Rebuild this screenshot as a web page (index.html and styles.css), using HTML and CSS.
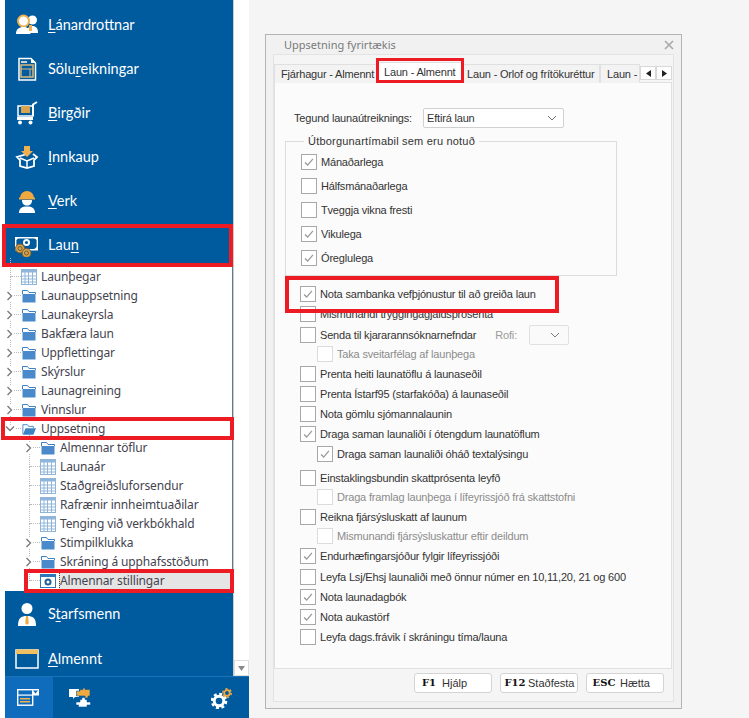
FILE: index.html
```html
<!DOCTYPE html>
<html lang="is">
<head>
<meta charset="utf-8">
<title>Uppsetning fyrirtækis</title>
<link rel="stylesheet" href="styles.css">
</head>
<body>
<svg class="defs" width="0" height="0" aria-hidden="true">
  <symbol id="folder" viewBox="0 0 14 14"><path d="M.5 5h13v8.500H.5z" fill="#4a8acb"/><path d="M.5 5V1.500h5L7 3.500h6.500V5" fill="none" stroke="#3f82c4"/></symbol>
  <symbol id="grid" viewBox="0 0 16 16"><rect x=".5" y=".5" width="15" height="15" fill="#fff" stroke="#8fb6da"/><rect x=".5" y=".5" width="15" height="3" fill="#8fb6da"/><path d="M4 3v13M7.500 3v13M11.500 3v13M1 7h15M1 10h15M1 13h15" stroke="#8fb6da"/></symbol>
  <symbol id="check" viewBox="0 0 16 16"><path d="M3.500 8.500l3 3 6-7" fill="none" stroke="#9a9a9a" stroke-width="1.500"/></symbol>
  <symbol id="chev" viewBox="0 0 8 10"><path d="M1.500 1l4 4-4 4" fill="none" stroke="#777" stroke-width="1.300"/></symbol>
  <symbol id="down" viewBox="0 0 10 6"><path d="M1 1l4 4 4-4" fill="none" stroke="#7a7a7a"/></symbol>
</svg>

<div class="page">
  <aside class="side">
    <div class="side-top">
      <div class="blue">
        <div class="nav"><svg class="nav-ico" viewBox="0 0 24 24"><circle cx="17.500" cy="7" r="4.500" fill="#fff"/><path d="M12 20c0-5 2-7 5.500-7s5.500 2 5.500 7z" fill="#fff"/><circle cx="8.500" cy="8" r="5.500" fill="#fff" stroke="#f0b050" stroke-width="2"/><path d="M1 21c0-5 3-7 7.500-7s7 2 7 7z" fill="#fff"/><rect x="14" y="12" width="3" height="6" fill="#f0b050"/></svg><span><u>L</u>ánardrottnar</span></div>
        <div class="nav"><svg class="nav-ico" viewBox="0 0 24 24"><path d="M4 1.500h12l4.500 4.500v17H4z" fill="#005a9e" stroke="#fff" stroke-width="1.500"/><path d="M16 1.500V6h4.500" fill="#fff"/><rect x="6" y="8" width="12" height="12" fill="none" stroke="#d9b77a" stroke-width="1.500"/><path d="M6 12h12M15 12v8" stroke="#d9b77a"/><rect x="6" y="4" width="6" height="2" fill="#cfcfcf"/></svg><span>Sölu<u>r</u>eikningar</span></div>
        <div class="nav"><svg class="nav-ico" viewBox="0 0 24 24"><path d="M3 5h15v10H3z" fill="none" stroke="#fff" stroke-width="1.500"/><rect x="6" y="5" width="9" height="7" fill="#d9a44e"/><path d="M18 15V3.500L22 1" fill="none" stroke="#fff" stroke-width="2"/><path d="M2 16h16v3H2z" fill="#fff"/><circle cx="5" cy="21.500" r="2" fill="#fff"/><circle cx="15.500" cy="21.500" r="2" fill="#fff"/></svg><span><u>B</u>irgðir</span></div>
        <div class="nav"><svg class="nav-ico" viewBox="0 0 24 24"><path d="M12 9L2 12l3 3v6l7 2 7-2v-6l3-3-4-3" fill="none" stroke="#fff" stroke-width="1.800"/><path d="M5 13l7 3 7-3M12 16v7" fill="none" stroke="#fff" stroke-width="1.500"/><path d="M9 1h6v5h3l-6 6-6-6h3z" fill="#f0b050"/></svg><span><u>I</u>nnkaup</span></div>
        <div class="nav"><svg class="nav-ico" viewBox="0 0 24 24"><path d="M5 9a7 7 0 0 1 14 0z" fill="#f0a93f"/><rect x="4" y="8.500" width="16" height="2" fill="#f0a93f"/><path d="M7 11h10c0 4-2 5.500-5 5.500S7 15 7 11z" fill="#fff"/><path d="M4 24c0-5 3-6.500 8-6.500s8 1.500 8 6.500z" fill="#fff"/></svg><span><u>V</u>erk</span></div>
        <div class="nav"><svg class="nav-ico" viewBox="0 0 24 24"><path d="M.7 4.700h21.600v12H.7z" fill="none" stroke="#fff" stroke-width="1.400"/><path d="M0 4h5l-5 4zM23 4h-5l5 4zM23 17h-5l5-4z" fill="#fff"/><circle cx="11.500" cy="9.500" r="3.500" fill="#fff"/><circle cx="11.500" cy="9.500" r="1.600" fill="#005a9e"/><circle cx="5" cy="15.500" r="4.500" fill="#d9a44e" stroke="#6f5a30"/><circle cx="5" cy="15.500" r="2" fill="none" stroke="#6f5a30"/><circle cx="11.500" cy="20" r="4.500" fill="#d9a44e" stroke="#6f5a30"/><circle cx="11.500" cy="20" r="2" fill="none" stroke="#6f5a30"/></svg><span>Lau<u>n</u></span></div>
      </div>
      <div class="tree">
        <div class="row leaf"><svg class="ti"><use href="#grid"/></svg><span>Launþegar</span></div>
        <div class="row"><svg class="chev"><use href="#chev"/></svg><svg class="fi"><use href="#folder"/></svg><span>Launauppsetning</span></div>
        <div class="row"><svg class="chev"><use href="#chev"/></svg><svg class="fi"><use href="#folder"/></svg><span>Launakeyrsla</span></div>
        <div class="row"><svg class="chev"><use href="#chev"/></svg><svg class="fi"><use href="#folder"/></svg><span>Bakfæra laun</span></div>
        <div class="row"><svg class="chev"><use href="#chev"/></svg><svg class="fi"><use href="#folder"/></svg><span>Uppflettingar</span></div>
        <div class="row"><svg class="chev"><use href="#chev"/></svg><svg class="fi"><use href="#folder"/></svg><span>Skýrslur</span></div>
        <div class="row"><svg class="chev"><use href="#chev"/></svg><svg class="fi"><use href="#folder"/></svg><span>Launagreining</span></div>
        <div class="row"><svg class="chev"><use href="#chev"/></svg><svg class="fi"><use href="#folder"/></svg><span>Vinnslur</span></div>
        <div class="row"><svg class="chev open"><use href="#chev"/></svg><svg class="fi" viewBox="0 0 16 14"><path d="M1 13V2h5l1.500 2H13v2" fill="none" stroke="#3f82c4"/><path d="M4 6h12l-3 7.500H1z" fill="#3f82c4"/></svg><span>Uppsetning</span></div>
        <div class="row l1"><svg class="chev"><use href="#chev"/></svg><svg class="fi"><use href="#folder"/></svg><span>Almennar töflur</span></div>
        <div class="row l1 leaf"><svg class="ti"><use href="#grid"/></svg><span>Launaár</span></div>
        <div class="row l1 leaf"><svg class="ti"><use href="#grid"/></svg><span>Staðgreiðsluforsendur</span></div>
        <div class="row l1 leaf"><svg class="ti"><use href="#grid"/></svg><span>Rafrænir innheimtuaðilar</span></div>
        <div class="row l1 leaf"><svg class="ti"><use href="#grid"/></svg><span>Tenging við verkbókhald</span></div>
        <div class="row l1"><svg class="chev"><use href="#chev"/></svg><svg class="fi"><use href="#folder"/></svg><span>Stimpilklukka</span></div>
        <div class="row l1"><svg class="chev"><use href="#chev"/></svg><svg class="fi"><use href="#folder"/></svg><span>Skráning á upphafsstöðum</span></div>
        <div class="row l1 leaf"><svg class="ti" viewBox="0 0 16 14"><rect x=".5" y=".5" width="15" height="13" fill="#fff" stroke="#2d78bd"/><rect x=".5" y=".5" width="15" height="2.500" fill="#2d78bd"/><circle cx="8" cy="8" r="2.500" fill="#fff" stroke="#22609c" stroke-width="2"/></svg><span class="sel">Almennar stillingar</span></div>
      </div>
      <div class="blue lower">
        <div class="nav"><svg class="nav-ico" viewBox="0 0 24 24"><circle cx="12" cy="6.500" r="5.500" fill="#fff"/><path d="M3 24c0-8 3-10 9-10s9 2 9 10z" fill="#fff"/><path d="M11 14h2l.8 7-1.800 2-1.800-2z" fill="#f0a93f"/></svg><span>S<u>t</u>arfsmenn</span></div>
        <div class="nav last"><svg class="nav-ico" viewBox="0 0 24 24"><rect x="1" y="3" width="22" height="18" fill="none" stroke="#fff" stroke-width="1.500"/><rect x="1" y="2.500" width="22" height="4.500" fill="#f0c060"/></svg><span><u>A</u>lmennt</span></div>
      </div>
    </div>
    <div class="vscroll"><div class="vscroll-btn"><svg width="7" height="5" viewBox="0 0 7 5"><path d="M0 0h7L3.500 5z" fill="#8a8a8a"/></svg></div></div>
    <div class="bottom">
      <div class="b-tab on"><svg width="22" height="17" viewBox="0 0 22 17"><rect x=".7" y=".7" width="15" height="15.500" fill="none" stroke="#fff" stroke-width="1.400"/><rect x="15" y="0" width="7" height="6.500" fill="#fff"/><rect x=".7" y="5.500" width="15" height="1.200" fill="#fff"/><rect x="3" y="9" width="10" height="1.500" fill="#f0b050"/><rect x="3" y="12" width="10" height="1.500" fill="#f0b050"/><path d="M16 1.500h5L18.500 4.500z" fill="#0f6cbd"/></svg></div>
      <div class="b-tab puzzle"><svg width="22" height="20" viewBox="0 0 22 20"><path d="M0 1h10v8H6L4 11V9H0z" fill="#fff"/><path d="M7.500 3h3.500V1.500h3V0h2v1.500h5V8h-2v2h-3V8H7.500z" fill="#f0a93f" stroke="#005a9e" stroke-width=".6"/><path d="M11 11.500h2V9.500h3v2h2V14h3.500v3H18v2H9.500v-2H7v-3h4z" fill="#fff" stroke="#005a9e" stroke-width=".6"/></svg></div>
      <div class="b-tab gear"><svg width="22" height="21" viewBox="0 0 22 21"><circle cx="8" cy="13" r="4.800" fill="none" stroke="#fff" stroke-width="3"/><circle cx="8" cy="13" r="7.100" fill="none" stroke="#fff" stroke-width="2.400" stroke-dasharray="3 2.580"/><circle cx="16" cy="5" r="2.800" fill="none" stroke="#f0a93f" stroke-width="1.800"/><circle cx="16" cy="5" r="4.300" fill="none" stroke="#f0a93f" stroke-width="1.400" stroke-dasharray="2.250 2.250"/></svg></div>
    </div>
  </aside>

  <main class="desk">
    <section class="dialog">
      <header class="d-title"><span>Uppsetning fyrirtækis</span><svg width="10" height="10" viewBox="0 0 10 10"><path d="M1 1l8 8M9 1L1 9" stroke="#a8a8a8" stroke-width="1.600"/></svg></header>
      <div class="d-inner">
        <div class="tabs">
          <div class="tab t1">Fjárhagur - Almennt</div>
          <div class="tab t2 active">Laun - Almennt</div>
          <div class="tab t3">Laun - Orlof og frítökuréttur</div>
          <div class="tab t4">Laun -</div>
          <div class="tab-arrows"><span><svg width="5" height="7" viewBox="0 0 5 7"><path d="M5 0v7L0 3.500z" fill="#222"/></svg></span><span><svg width="5" height="7" viewBox="0 0 5 7"><path d="M0 0v7l5-3.500z" fill="#222"/></svg></span></div>
        </div>
        <div class="panel">
          <div class="type-row"><label>Tegund launaútreiknings:</label><div class="select"><span>Eftirá laun</span><svg width="10" height="6"><use href="#down"/></svg></div></div>
          <fieldset class="group">
            <legend>Útborgunartímabil sem eru notuð</legend>
            <div class="ck"><i class="box"><svg><use href="#check"/></svg></i>Mánaðarlega</div>
            <div class="ck"><i class="box"></i>Hálfsmánaðarlega</div>
            <div class="ck"><i class="box"></i>Tveggja vikna fresti</div>
            <div class="ck"><i class="box"><svg><use href="#check"/></svg></i>Vikulega</div>
            <div class="ck"><i class="box"><svg><use href="#check"/></svg></i>Óreglulega</div>
          </fieldset>
          <div class="opts">
            <div class="op"><i class="box"><svg><use href="#check"/></svg></i>Nota sambanka vefþjónustur til að greiða laun</div>
            <div class="op"><i class="box"></i>Mismunandi tryggingagjaldsprósenta</div>
            <div class="op senda"><i class="box"></i>Senda til kjararannsóknarnefndar<span class="rofi">Rofi:</span><span class="mini"><svg width="10" height="6"><use href="#down"/></svg></span></div>
            <div class="op sub dis"><i class="box"></i>Taka sveitarfélag af launþega</div>
            <div class="op"><i class="box"></i>Prenta heiti launatöflu á launaseðil</div>
            <div class="op"><i class="box"></i>Prenta Ístarf95 (starfakóða) á launaseðil</div>
            <div class="op"><i class="box"></i>Nota gömlu sjómannalaunin</div>
            <div class="op"><i class="box"><svg><use href="#check"/></svg></i>Draga saman launaliði í ótengdum launatöflum</div>
            <div class="op indent"><i class="box"><svg><use href="#check"/></svg></i>Draga saman launaliði óháð textalýsingu</div>
            <div class="op gap"><i class="box"></i>Einstaklingsbundin skattprósenta leyfð</div>
            <div class="op sub dis"><i class="box"></i>Draga framlag launþega í lífeyrissjóð frá skattstofni</div>
            <div class="op"><i class="box"></i>Reikna fjársýsluskatt af launum</div>
            <div class="op sub dis"><i class="box"></i>Mismunandi fjársýsluskattur eftir deildum</div>
            <div class="op"><i class="box"><svg><use href="#check"/></svg></i>Endurhæfingarsjóður fylgir lífeyrissjóði</div>
            <div class="op senda"><i class="box"></i>Leyfa Lsj/Ehsj launaliði með önnur númer en 10,11,20, 21 og 600</div>
            <div class="op"><i class="box"><svg><use href="#check"/></svg></i>Nota launadagbók</div>
            <div class="op"><i class="box"><svg><use href="#check"/></svg></i>Nota aukastörf</div>
            <div class="op"><i class="box"></i>Leyfa dags.frávik í skráningu tíma/launa</div>
          </div>
        </div>
        <footer class="d-foot">
          <button class="btn"><b>F1</b>Hjálp</button>
          <button class="btn"><b>F12</b>Staðfesta</button>
          <button class="btn"><b class="wide">ESC</b>Hætta</button>
        </footer>
      </div>
    </section>
  </main>
</div>

<div class="mark m-laun"></div>
<div class="mark m-upp"></div>
<div class="mark m-alm"></div>
<div class="mark m-tab"></div>
<div class="mark m-nota"></div>
</body>
</html>
```

FILE: styles.css
```css
* { box-sizing: border-box; }
html, body { margin: 0; height: 100%; }
body { width: 749px; height: 718px; overflow: hidden; position: relative; background: #f5f5f5; font-family: "Liberation Sans", sans-serif; }
.defs { position: absolute; }
.page { display: flex; height: 718px; }

.side { width: 249px; height: 718px; background: #fff; display: flex; flex-direction: column; position: relative; flex: none; }
.side-top { width: 228px; margin-left: 5px; flex: none; height: 676px; display: flex; flex-direction: column; }
.blue { background: #005a9e; padding-top: 3px; }
.blue.lower { padding-top: 1px; flex: 1; }
.nav { height: 44px; display: flex; align-items: center; padding-left: 10px; color: #fff; font: 14.500px/20px Lato, sans-serif; }
.nav.last { height: 40px; padding-top: 6px; }
.nav-ico { width: 24px; height: 24px; margin-right: 9px; flex: none; }
.nav u { text-underline-offset: 2px; }

.tree { height: 324px; background: #fff; border-right: 1px solid #5a7d9c; color: #44444f; font: 12px/19px "Noto Sans", sans-serif; letter-spacing: -.15px; position: relative; }
.row { height: 19px; display: flex; align-items: center; padding-left: 1px; position: relative; white-space: nowrap; }
.row::before { content: ""; position: absolute; left: 5px; top: -9px; height: 19px; border-left: 1px dotted #bbb; }
.row::after { content: ""; position: absolute; left: 6px; top: 9px; width: 10px; border-top: 1px dotted #bbb; }
.row.l1::before { left: 24px; }
.row.l1::after { left: 25px; }
.row.l1 { padding-left: 20px; }
.chev { width: 8px; height: 10px; margin-right: 8px; flex: none; position: relative; z-index: 1; background: #fff; }
.chev.open { transform: rotate(90deg); }
.fi { width: 14px; height: 14px; margin-right: 5px; flex: none; position: relative; z-index: 1; }
.ti { width: 16px; height: 16px; margin-right: 4px; flex: none; position: relative; z-index: 1; }
.leaf { padding-left: 16px; }
.row.l1.leaf { padding-left: 35px; }
.sel { background: #e5e5e5; flex: 1; height: 18px; margin-right: 1px; outline: 1px dotted #444; outline-offset: -1px; margin-left: -1px; padding-left: 1px; line-height: 18px; }

.vscroll { position: absolute; left: 233px; top: 0; width: 16px; height: 676px; border-left: 1px solid #ccc; display: flex; align-items: flex-end; }
.vscroll-btn { width: 15px; height: 16px; background: #fff; border: 1px solid #ddd; display: flex; align-items: center; justify-content: center; }
.bottom { flex: 1; margin-left: 5px; background: #005a9e; border-top: 1px solid #1a72b8; display: flex; align-items: center; }
.b-tab { width: 48px; height: 100%; display: flex; align-items: center; justify-content: center; }
.b-tab.on { background: #0f6cbd; padding-right: 3px; }
.b-tab.puzzle { justify-content: flex-start; padding-left: 16px; }
.b-tab.gear { margin-left: auto; width: 49px; justify-content: flex-start; padding: 2px 0 0 11px; }

.desk { padding: 34px 0 0 16px; flex: none; }
.dialog { width: 417px; height: 675px; background: #f1f1f1; border: 1px solid #b4b4b4; display: flex; flex-direction: column; }
.d-title { height: 19px; flex: none; display: flex; align-items: center; justify-content: space-between; padding: 0 7px 0 18px; color: #7a7a7a; font: 11px/18px "Noto Sans", sans-serif; }
.d-inner { margin: 0 7px; height: 648px; border: 1px solid #e3e3e3; background: #f5f5f5; padding: 7px 0 0; display: flex; flex-direction: column; font: 11px/16px "Liberation Sans", sans-serif; letter-spacing: -.18px; color: #333; }
.tabs { display: flex; height: 21px; flex: none; align-items: flex-end; margin-bottom: -1px; position: relative; }
.tab { height: 19px; border: 1px solid #e0e0e0; border-bottom: 0; background: #f3f3f3; padding: 1px 0 0 6px; white-space: nowrap; overflow: hidden; line-height: 16px; }
.t1 { width: 103px; }
.t2 { width: 86px; height: 21px; background: #fff; padding-top: 1px; }
.t3 { width: 137px; padding-left: 3px; }
.t4 { width: 40px; }
.tab-arrows { display: flex; height: 14px; align-self: flex-start; margin-top: 4px; }
.tab-arrows span { width: 16px; height: 14px; background: #fff; border: 1px solid #d8d8d8; display: flex; align-items: center; justify-content: center; }
.panel { width: 398px; height: 587px; background: #fbfbfb; border: 1px solid #e0e0e0; padding: 25px 0 0 10px; flex: none; }
.type-row { display: flex; align-items: center; height: 20px; }
.type-row label { width: 138px; padding-left: 9px; flex: none; white-space: nowrap; }
.select { width: 141px; height: 20px; background: #fff; border: 1px solid #d0d0d0; border-radius: 2px; display: flex; align-items: center; justify-content: space-between; padding: 0 6px 0 3px; }
.group { margin: 5px 0 0; width: 332px; height: 143px; padding: 1px 0 0 15px; border: 1px solid #dcdcdc; border-radius: 0; }
.group legend { padding: 0 4px; margin-left: 3px; line-height: 16px; letter-spacing: .2px; }
.ck, .op { display: flex; align-items: center; white-space: nowrap; }
.ck { height: 24px; }
.box { width: 16px; height: 16px; background: #fff; border: 1px solid #a8a8a8; margin-right: 4px; flex: none; display: block; }
.box svg { width: 14px; height: 14px; display: block; }
.opts { padding: 8px 0 0 15px; }
.op { height: 20px; }
.op.gap { margin-top: 4px; }
.op.sub { padding-left: 17px; margin-top: -1px; }
.op.indent { padding-left: 17px; }
.op.sub .box, .dis .box { border-color: #dcdcdc; }
.dis { color: #8c8c8c; }
.senda { margin-top: 1px; }
.rofi { margin-left: 19px; color: #9a9a9a; }
.mini { width: 40px; height: 20px; margin-left: 12px; border: 1px solid #e0e0e0; border-radius: 2px; background: #fafafa; display: flex; align-items: center; justify-content: flex-end; padding-right: 8px; }
.d-foot { display: flex; justify-content: flex-end; gap: 8px; padding: 4px 9px 0 0; }
.btn { width: 78px; height: 20px; background: #fff; border: 1px solid #d4d4d4; border-radius: 3px; padding: 0 0 0 1px; font: 11px/16px "Liberation Sans", sans-serif; color: #333; display: flex; align-items: center; white-space: nowrap; }
.btn b { width: 26px; text-align: center; font: bold 10px/16px "DejaVu Serif", serif; color: #111; flex: none; }
.btn b.wide { width: 32px; }

.mark { position: absolute; border: 4px solid #ed1c24; pointer-events: none; }
.m-laun { left: 2px; top: 224px; width: 231px; height: 43px; }
.m-upp { left: 1px; top: 417px; width: 233px; height: 23px; }
.m-alm { left: 24px; top: 569px; width: 210px; height: 24px; }
.m-tab { left: 376px; top: 58px; width: 88px; height: 25px; border-width: 3px; }
.m-nota { left: 285px; top: 276px; width: 274px; height: 37px; }
```
